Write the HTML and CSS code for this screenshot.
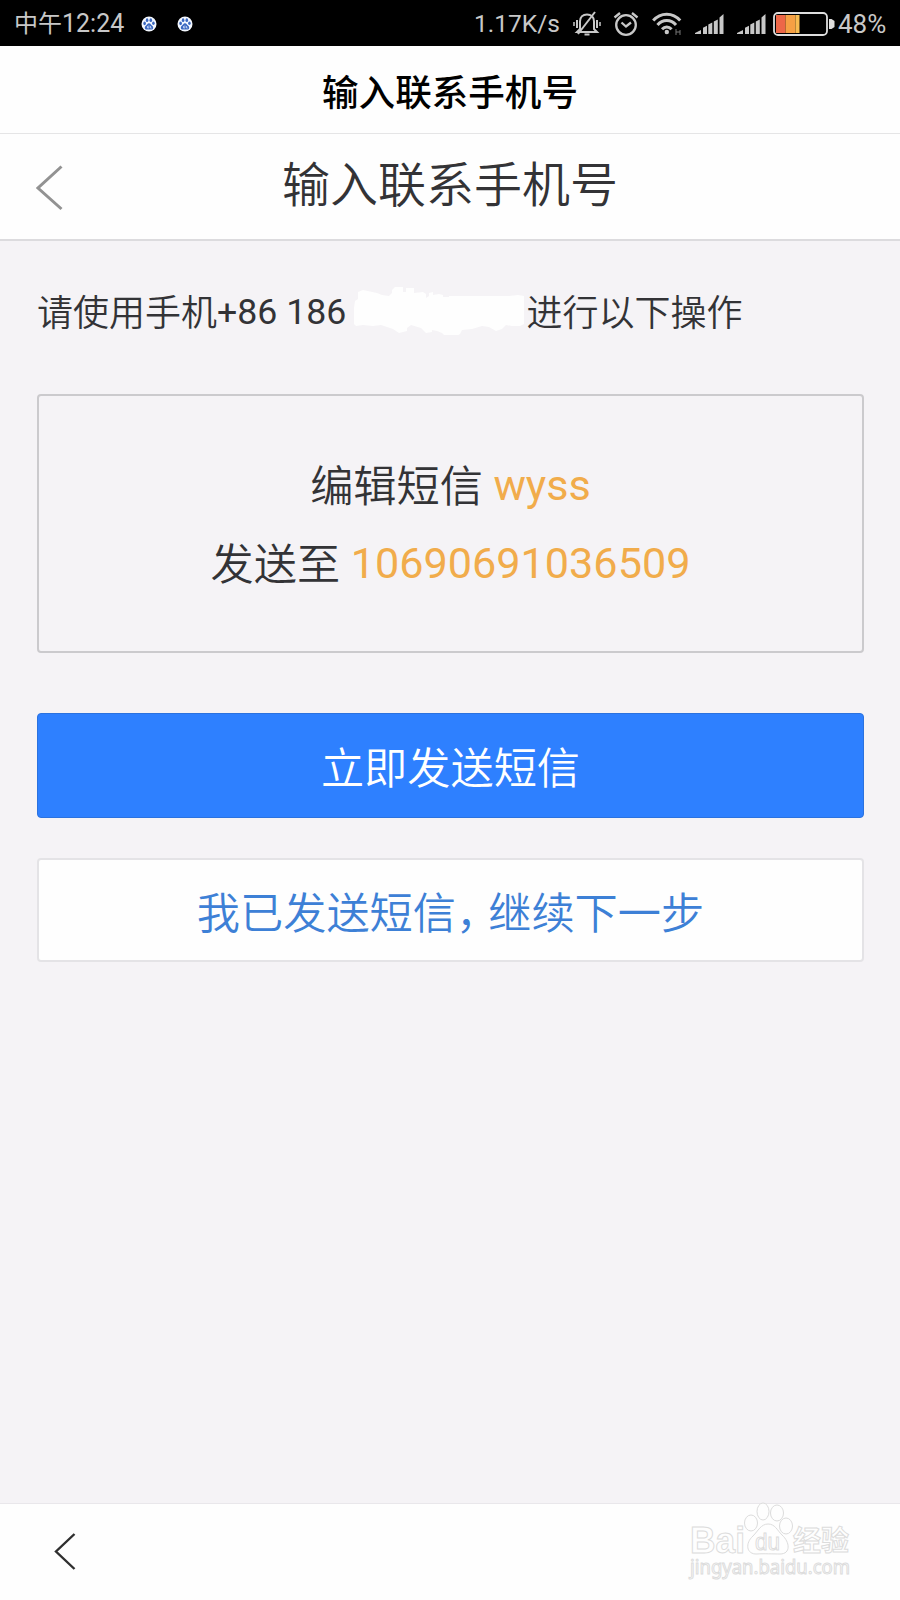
FILE: index.html
```html
<!DOCTYPE html>
<html lang="zh-CN">
<head>
    <meta charset="UTF-8">
    <meta name="viewport" content="width=device-width, initial-scale=1.0">
    <title>输入联系手机号</title>
    <link rel="stylesheet" href="styles.css">
</head>
<body>
    <svg class="defs" width="0" height="0">
        <symbol id="paw" viewBox="0 0 16 16">
            <circle cx="8" cy="8" r="7.5" fill="#f4f8ff"/>
            <g fill="#3b68c0">
                <ellipse cx="3.6" cy="7.4" rx="1.3" ry="1.8"/>
                <ellipse cx="6.1" cy="4.2" rx="1.3" ry="1.9"/>
                <ellipse cx="9.8" cy="4.2" rx="1.3" ry="1.9"/>
                <ellipse cx="12.4" cy="7.2" rx="1.3" ry="1.8"/>
                <path d="M8 7.2c1.6 0 2 1.6 3.2 2.6 1.8 1.5 1 4-1 3.8-1.6-.2-2.8-.2-4.4 0-2 .2-2.8-2.3-1-3.8C6 8.8 6.4 7.2 8 7.2z"/>
            </g>
            <path d="M6.5 10v2h1.4v-2.6M9.5 10v2h1.2" fill="none" stroke="#dce8ff" stroke-width=".7"/>
        </symbol>
        <symbol id="signal" viewBox="0 0 29 20">
            <path d="M0 20v-1l6-3v4zM8 20v-6.2l4-2V20zM13.3 20v-9.4l4-2V20zM18.8 20V7.5l4-2V20zM24.5 20V3.5L28.5 0v20z" fill="#c8c8c8"/>
        </symbol>
    </svg>

    <div class="status-bar">
        <span class="time"><span class="cjk">中午</span>12:24</span>
        <svg class="paw first" width="16" height="16"><use href="#paw"/></svg>
        <svg class="paw" width="16" height="16"><use href="#paw"/></svg>
        <span class="speed">1.17K/s</span>
        <svg class="bell" width="28" height="26" viewBox="0 0 28 26" fill="none" stroke="#c8c8c8" stroke-width="2">
            <path d="M7 20V10.5C7 6 10 3.5 14 3.5S21 6 21 10.5V18l3 3H4l3-3M11.5 23.5h5M4 9v8M24 9v8"/>
            <path d="M1 11v4M27 11v4" stroke-width="1.5"/>
            <path d="M22 1L5 23"/>
        </svg>
        <svg class="alarm" width="26" height="26" viewBox="0 0 26 26" fill="none" stroke="#c8c8c8" stroke-width="2.3">
            <circle cx="13" cy="14" r="9.8"/>
            <path d="M8.5 11.5l4.5 4 5-4M1.5 6.5L7 2M24.5 6.5L19 2"/>
        </svg>
        <svg class="wifi" width="31" height="24" viewBox="0 0 31 24" fill="none" stroke="#c8c8c8" stroke-width="3">
            <path d="M1.2 8.5c7.5-8.5 19.5-8.5 27 0M5.5 13c5-6 13.5-6 18.5 0M10 17.2c2.8-3 6.8-3 9.6 0"/>
            <circle cx="14.8" cy="20" r="2.2" fill="#c8c8c8" stroke="none"/>
            <path d="M24 17v6M28 18v5M24 20h4" stroke="#777" stroke-width="1"/>
        </svg>
        <svg class="signal" width="29" height="20"><use href="#signal"/></svg>
        <svg class="signal second" width="29" height="20"><use href="#signal"/></svg>
        <svg class="battery" width="62" height="24" viewBox="0 0 62 24">
            <rect x="1" y="1" width="53" height="22" rx="4" fill="#000" stroke="#dedede" stroke-width="1.8"/>
            <path d="M3 3h9.5v18H3z" fill="#ed6748"/>
            <path d="M12.5 3h10v18h-10z" fill="#f6a044"/>
            <path d="M22.5 3h4v18h-4z" fill="#f8bc51"/>
            <path d="M56 7h2.5l3 2v6l-3 2H56z" fill="#dedede"/>
        </svg>
        <span class="percent">48%</span>
    </div>

    <div class="app-title">输入联系手机号</div>

    <div class="nav">
        <svg class="back" width="28" height="46" viewBox="0 0 28 46">
            <path d="M25.5 1.5L2 23l23.5 21" fill="none" stroke="#929292" stroke-width="3"/>
        </svg>
        <h1>输入联系手机号</h1>
    </div>

    <div class="content">
        <p class="notice">
            <span>请使用手机<span class="num">+86 186</span></span>
            <svg class="mask" width="172" height="50" viewBox="0 0 172 50">
                <path d="M1 16l3-2V7l5-2 14 3 5 2 7 1 3-3V5l3-3h8v5h3V3h8v5l9-1 3 2v4l3-2V8l4-1v3l6-1 4 1v2h6v-1h60l9-1 6 1v28l-4 2h-8l-6-1-4 4-6 2-7-4-7-1-10 3-10 1-2 4-5 3-8 1-5-5-5-2-5-1v2l-6 1-5-5-10-3-4 3v3l-8 2-6-4-12-4-8 1-10-1-7 1-4-4z" fill="#fefefe"/>
            </svg>
            <span>进行以下操作</span>
        </p>

        <div class="message">
            <p>编辑短信 <em>wyss</em></p>
            <p>发送至 <em>10690691036509</em></p>
        </div>

        <button class="btn primary">立即发送短信</button>
        <button class="btn plain">我已发送短信<span class="comma">，</span>继续下一步</button>
    </div>

    <div class="bottom-bar">
        <svg width="22" height="40" viewBox="0 0 22 40">
            <path d="M20.5 2L2 19.5 20.5 37" fill="none" stroke="#2f2f2f" stroke-width="2.4"/>
        </svg>
        <svg class="watermark" width="166" height="82" viewBox="0 0 166 82" fill="#fefefe" stroke="#dcdcdc" stroke-width="1">
            <g class="logo-text">
                <text x="3" y="50" font-size="37" textLength="55" lengthAdjust="spacingAndGlyphs">Bai</text>
                <text class="logo-cjk" x="106" y="48" font-size="28" textLength="56" lengthAdjust="spacingAndGlyphs">经验</text>
            </g>
            <ellipse cx="64" cy="20" rx="6.5" ry="8"/>
            <ellipse cx="76" cy="8.5" rx="6" ry="8.5"/>
            <ellipse cx="90" cy="10" rx="6.5" ry="8"/>
            <ellipse cx="99" cy="23" rx="6.5" ry="8"/>
            <path d="M81 21c7 0 9 6 14 11 8 7 9 19-2 19-5 0-18-.5-23 0-11 .5-12-11-4-18 5-5 8-12 15-12z"/>
            <text class="du" x="68" y="47" font-size="24" textLength="25" lengthAdjust="spacingAndGlyphs">du</text>
            <text class="url" x="3" y="71" font-size="19" textLength="160" lengthAdjust="spacingAndGlyphs">jingyan.baidu.com</text>
        </svg>
    </div>
</body>
</html>
```
FILE: styles.css
```css
* { box-sizing: border-box; }
body {
    font-family: Roboto, "Noto Sans CJK SC", sans-serif;
    font-weight: 350;
    margin: 0;
    height: 1600px;
    display: flex;
    flex-direction: column;
    background: #f5f3f6;
    color: #333336;
    overflow: hidden;
}
p, h1 { margin: 0; font-weight: inherit; }
svg { display: block; flex: none; }
.defs { position: absolute; }

.status-bar {
    display: flex;
    align-items: center;
    height: 45.5px;
    padding: 2px 13px 0 14px;
    background: #000;
    color: #c8c8c8;
    font-size: 25px;
    font-weight: 400;
    line-height: 44px;
    white-space: nowrap;
}
.time { width: 111px; }
.cjk { font-size: 24px; }
.paw.first { margin-left: 16px; }
.paw + .paw { margin-left: 20px; }
.speed { margin-left: auto; margin-right: 13px; font-size: 24.5px; }
.alarm { margin-left: 12px; }
.wifi { margin-left: 13px; }
.signal { margin-left: 12px; }
.signal.second { margin-left: 13px; }
.battery { margin-left: 7px; }
.percent { width: 49px; margin-left: 3px; font-size: 26px; }

.app-title {
    height: 88.5px;
    padding-top: 6px;
    border-bottom: 1px solid #e5e5e6;
    background: #fefefe;
    color: #000;
    font-size: 36.6px;
    font-weight: 500;
    line-height: 84px;
    text-align: center;
}
.nav {
    display: grid;
    grid-template-columns: 37px 1fr 37px;
    align-items: center;
    height: 107px;
    border-bottom: 2px solid #dcdbde;
    background: #fefefe;
}
.nav .back { grid-column: 1; margin: 3px 0 0 36px; }
.nav h1 {
    grid-column: 2;
    font-size: 48px;
    line-height: 98px;
    padding-bottom: 2px;
    text-align: center;
}

.content {
    flex: 1;
    padding: 39px 36px 0 37px;
}
.notice {
    display: flex;
    align-items: center;
    height: 60px;
    font-size: 36px;
    white-space: nowrap;
}
.num { font-size: 35.7px; font-weight: 400; vertical-align: 2px; }
.mask { margin-left: 8px; }
.message {
    height: 259px;
    margin-top: 54px;
    padding: 53px 0 0;
    border: 2px solid #cbcacd;
    border-radius: 4px;
    font-size: 43.2px;
    line-height: 78px;
    text-align: center;
}
.message p { height: 78px; }
.message em {
    color: #f1ac4b;
    font-style: normal;
    font-weight: 400;
    line-height: 1;
    vertical-align: 2px;
}
.btn {
    display: block;
    width: 100%;
    border-radius: 4px;
    font: inherit;
    font-size: 43.2px;
}
.primary {
    height: 105px;
    margin-top: 60px;
    padding: 0 0 2px;
    border: 1px solid #2b72df;
    background: #2e80ff;
    color: #fff;
}
.plain {
    height: 104px;
    margin-top: 40px;
    padding: 0 0 1px;
    border: 2px solid #e4e3e6;
    background: #fefefe;
    color: #3d80d6;
}
.comma { letter-spacing: -11px; }

.bottom-bar {
    display: flex;
    justify-content: space-between;
    align-items: center;
    height: 97px;
    padding: 0 47px 0 54px;
    border-top: 1px solid #e9e7eb;
    background: #fefefe;
}
.watermark {
    align-self: flex-start;
    margin-top: -1px;
    overflow: visible;
}
.logo-text { font-family: "Liberation Sans", sans-serif; font-weight: 700; }
.logo-cjk { font-family: "Noto Sans CJK SC", sans-serif; }
.du { font-family: "Liberation Sans", sans-serif; font-weight: 400; }
.url { font-family: "Noto Sans", sans-serif; font-weight: 400; }
```
